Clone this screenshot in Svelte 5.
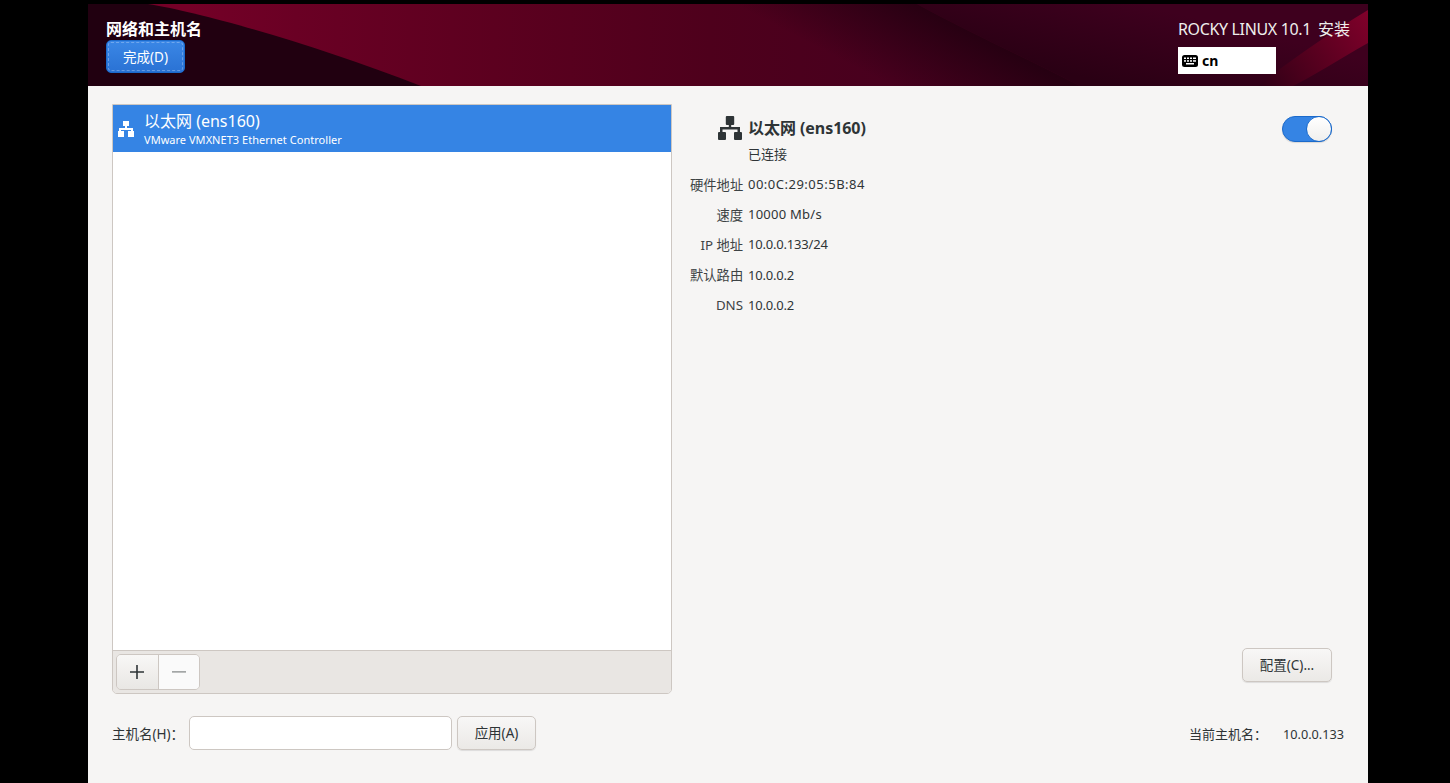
<script>
  const details = [
    { key: '硬件地址', val: '00:0C:29:05:5B:84', fit: 'wide' },
    { key: '速度', val: '10000 Mb/s', fit: 'mid' },
    { key: 'IP 地址', val: '10.0.0.133/24', fit: 'tight' },
    { key: '默认路由', val: '10.0.0.2', fit: 'tight' },
    { key: 'DNS', val: '10.0.0.2', fit: 'tight' }
  ];
</script>

<div class="window">
  <header class="banner">
    <svg class="art" viewBox="0 0 1280 82" preserveAspectRatio="none" aria-hidden="true">
      <defs>
        <linearGradient id="red" gradientUnits="userSpaceOnUse" x1="100" y1="0" x2="1000" y2="0">
          <stop offset="0" stop-color="#740027" />
          <stop offset="0.12" stop-color="#6a0024" />
          <stop offset="0.34" stop-color="#5c001f" />
          <stop offset="0.58" stop-color="#4e001c" />
          <stop offset="0.78" stop-color="#48001e" />
          <stop offset="1" stop-color="#40001c" />
        </linearGradient>
        <linearGradient id="band" gradientUnits="userSpaceOnUse" x1="790" y1="75" x2="829" y2="0">
          <stop offset="0" stop-color="#220010" stop-opacity="0" />
          <stop offset="1" stop-color="#220010" stop-opacity="0.85" />
        </linearGradient>
        <linearGradient id="upper" gradientUnits="userSpaceOnUse" x1="1050" y1="0" x2="1030" y2="82">
          <stop offset="0" stop-color="#3e001e" />
          <stop offset="1" stop-color="#2a0014" />
        </linearGradient>
        <linearGradient id="strip" gradientUnits="userSpaceOnUse" x1="1170" y1="82" x2="1280" y2="10">
          <stop offset="0" stop-color="#2e0016" />
          <stop offset="0.45" stop-color="#54001e" />
          <stop offset="1" stop-color="#80002a" />
        </linearGradient>
      </defs>
      <rect width="1280" height="82" fill="url(#upper)" />
      <path d="M0 0H829C880 28 940 55 992 82H0Z" fill="url(#red)" />
      <path d="M0 0H829C880 28 940 55 992 82H0Z" fill="url(#band)" />
      <path d="M0 0H60C110 8 220 38 333 82H0Z" fill="#210010" />
      <path d="M1170 82C1200 58 1240 30 1280 6V39C1250 56 1225 72 1205 82Z" fill="url(#strip)" />
    </svg>
    <div class="left">
      <h1>网络和主机名</h1>
      <button class="done">完成(D)</button>
    </div>
    <div class="right">
      <div class="product"><span class="latin">ROCKY LINUX 10.1</span><span class="install">安装</span></div>
      <div class="layout">
        <svg width="16" height="12" viewBox="0 0 16 12" aria-hidden="true">
          <rect width="16" height="12" rx="2.500" fill="#000" />
          <g fill="#fff">
            <rect x="2" y="2.500" width="2" height="1.500" /><rect x="5" y="2.500" width="2" height="1.500" /><rect x="8" y="2.500" width="2" height="1.500" /><rect x="11" y="2.500" width="3" height="1.500" />
            <rect x="2" y="5.200" width="2" height="1.500" /><rect x="5" y="5.200" width="2" height="1.500" /><rect x="8" y="5.200" width="2" height="1.500" /><rect x="11" y="5.200" width="3" height="1.500" />
            <rect x="4" y="8" width="8" height="1.500" />
          </g>
        </svg>
        <span>cn</span>
      </div>
    </div>
  </header>

  <main class="content">
    <div class="columns">
      <section class="list-pane">
        <div class="list">
          <div class="row">
            <svg class="net-small" width="16" height="16" viewBox="0 0 16 16" aria-hidden="true">
              <path d="M5 0h6v5H9v2h6v3h1v6h-6v-6h3V9H3v1h3v6H0v-6h1V7h6V5H5z" fill="#fff" />
            </svg>
            <div class="row-text">
              <div class="row-title">以太网 (ens160)</div>
              <div class="row-sub">VMware VMXNET3 Ethernet Controller</div>
            </div>
          </div>
        </div>
        <div class="toolbar">
          <div class="btn-group">
            <button class="tool add" aria-label="添加">
              <svg width="14" height="14" viewBox="0 0 14 14"><path d="M6.200 0h1.600v6.200H14v1.600H7.800V14H6.200V7.800H0V6.200h6.200z" fill="#2e3436" /></svg>
            </button>
            <button class="tool remove" aria-label="移除">
              <svg width="14" height="14" viewBox="0 0 14 14"><rect y="6" width="14" height="1.700" fill="#a3a6a6" /></svg>
            </button>
          </div>
        </div>
      </section>

      <section class="detail">
        <div class="detail-top">
          <div class="head-wrap">
            <div class="head">
              <svg class="net-large" width="24" height="24" viewBox="0 0 24 24" aria-hidden="true">
                <path d="M8.800 0h6.400a1 1 0 0 1 1 1v7a1 1 0 0 1-1 1H13.200v2H22v5h1a1 1 0 0 1 1 1v6a1 1 0 0 1-1 1h-6a1 1 0 0 1-1-1v-6a1 1 0 0 1 1-1h2.500v-2.500h-15V16H7a1 1 0 0 1 1 1v6a1 1 0 0 1-1 1H1a1 1 0 0 1-1-1v-6a1 1 0 0 1 1-1h1v-5h8.800V9H8.800a1 1 0 0 1-1-1V1a1 1 0 0 1 1-1z" fill="#2e3436" />
              </svg>
              <div class="head-title">以太网 (ens160)</div>
            </div>
            <div class="status">已连接</div>
          </div>
          <div class="switch" role="switch" aria-checked="true" tabindex="0"><span class="knob"></span></div>
        </div>
        <div class="grid">
          {#each details as d}
            <div class="key">{d.key}</div>
            <div class="val {d.fit}">{d.val}</div>
          {/each}
        </div>
        <div class="config-row">
          <button class="btn config">配置(C)...</button>
        </div>
      </section>
    </div>

    <div class="bottom">
      <label class="host-label" for="hostname">主机名(H)：</label>
      <input id="hostname" class="host-input" type="text" />
      <button class="btn apply">应用(A)</button>
      <div class="current">
        <span class="current-label">当前主机名：</span>
        <span class="current-val">10.0.0.133</span>
      </div>
    </div>
  </main>
</div>

<style>
  :global(body) {
    margin: 0;
    background: #000;
  }
  .window {
    width: 1280px;
    height: 779px;
    margin-left: 88px;
    padding-top: 4px;
    display: flex;
    flex-direction: column;
    font-family: "Noto Sans", "Noto Sans CJK SC", sans-serif;
    color: #2e3436;
    overflow: hidden;
  }
  .banner {
    position: relative;
    height: 82px;
    flex: none;
    display: flex;
    justify-content: space-between;
    overflow: hidden;
  }
  .art {
    position: absolute;
    inset: 0;
    width: 100%;
    height: 100%;
  }
  .left {
    position: relative;
    padding: 14px 0 0 18px;
  }
  h1 {
    margin: 0;
    font-size: 16px;
    font-weight: 700;
    line-height: 22px;
    color: #fff;
  }
  .done {
    display: block;
    width: 79px;
    height: 33px;
    margin-top: 0;
    padding: 0 0 2px;
    border: 1px solid #1b6acb;
    border-radius: 5px;
    outline: 1px dashed rgba(255, 255, 255, 0.28);
    outline-offset: -3px;
    background: linear-gradient(#3a87e6, #2a72d4);
    color: #fff;
    font: inherit;
    font-size: 13.500px;
  }
  .right {
    position: relative;
    width: 190px;
    padding-top: 14px;
    box-sizing: border-box;
  }
  .product {
    font-size: 16px;
    line-height: 22px;
    color: #eeeeec;
    white-space: nowrap;
  }
  .latin {
    letter-spacing: -0.35px;
  }
  .install {
    margin-left: 7px;
  }
  .layout {
    display: flex;
    align-items: center;
    gap: 4px;
    width: 94px;
    height: 27px;
    margin-top: 7px;
    padding-left: 4px;
    background: #fff;
    color: #000;
    font-size: 14px;
    font-weight: 700;
  }
  .content {
    flex: 1;
    background: #f6f5f4;
    display: flex;
    flex-direction: column;
    padding: 18px 36px 0 24px;
    min-height: 0;
  }
  .columns {
    display: flex;
    height: 590px;
    flex: none;
  }
  .list-pane {
    width: 560px;
    flex: none;
    box-sizing: border-box;
    border: 1px solid #cdc7c2;
    border-radius: 0 0 5px 5px;
    display: flex;
    flex-direction: column;
  }
  .list {
    flex: 1;
    background: #fff;
  }
  .row {
    height: 47px;
    background: #3584e4;
    color: #fff;
    display: flex;
    align-items: center;
    padding-left: 5px;
    gap: 10px;
  }
  .net-small {
    flex: none;
    margin-top: 0;
  }
  .row-title {
    font-size: 16px;
    line-height: 22px;
    margin-top: -1px;
  }
  .row-sub {
    font-size: 11px;
    line-height: 15px;
    letter-spacing: 0.03px;
  }
  .toolbar {
    height: 43px;
    flex: none;
    box-sizing: border-box;
    background: #e9e6e3;
    border-top: 1px solid #cdc7c2;
    border-radius: 0 0 4px 4px;
    padding: 3px 0 0 3px;
  }
  .btn-group {
    display: flex;
    width: 84px;
    height: 36px;
    box-sizing: border-box;
    border: 1px solid #cdc7c2;
    border-radius: 5px;
    overflow: hidden;
  }
  .tool {
    display: flex;
    align-items: center;
    justify-content: center;
    padding: 0;
    border: 0;
  }
  .add {
    width: 42px;
    padding-right: 1px;
    background: linear-gradient(#f8f7f6, #e9e7e4);
    border-right: 1px solid #cdc7c2;
  }
  .remove {
    flex: 1;
    background: #fafafa;
  }
  .detail {
    flex: 1;
    display: flex;
    flex-direction: column;
    min-width: 0;
    padding-left: 18px;
  }
  .detail-top {
    display: flex;
    justify-content: space-between;
    padding-top: 12px;
  }
  .head {
    display: flex;
    align-items: center;
    gap: 6px;
    margin-left: 28px;
    height: 24px;
  }
  .head-title {
    font-size: 16px;
    font-weight: 700;
    line-height: 24px;
    letter-spacing: -0.05px;
    white-space: nowrap;
  }
  .status {
    font-size: 13px;
    line-height: 20px;
    margin: 4px 0 0 58px;
  }
  .switch {
    width: 50px;
    height: 26px;
    box-sizing: border-box;
    border: 1px solid #1b6acb;
    border-radius: 13px;
    background: #3584e4;
    box-shadow: 0 1px 1px rgba(0, 0, 0, 0.12);
    display: flex;
    justify-content: flex-end;
  }
  .knob {
    width: 26px;
    height: 26px;
    flex: none;
    margin: -1px -1px 0 0;
    box-sizing: border-box;
    border: 1px solid #1b6acb;
    border-radius: 50%;
    background: linear-gradient(#ffffff, #f0efed);
  }
  .grid {
    display: grid;
    grid-template-columns: 53px auto;
    justify-content: start;
    column-gap: 5px;
    grid-auto-rows: 30.200px;
    align-items: center;
    font-size: 13px;
    margin-top: 5px;
  }
  .key {
    text-align: right;
    white-space: nowrap;
    font-size: 13.300px;
    color: #3d4345;
  }
  .val {
    white-space: nowrap;
  }
  .wide {
    letter-spacing: 0.5px;
  }
  .mid {
    letter-spacing: 0.25px;
  }
  .tight {
    letter-spacing: -0.2px;
  }
  .config-row {
    margin-top: auto;
    display: flex;
    justify-content: flex-end;
    padding-bottom: 12px;
  }
  .btn {
    box-sizing: border-box;
    height: 34px;
    padding: 0 0 2px;
    border: 1px solid #cdc7c2;
    border-radius: 5px;
    background: linear-gradient(#f8f7f6, #ebe9e6);
    box-shadow: 0 1px 1px rgba(0, 0, 0, 0.1);
    color: #2e3436;
    font: inherit;
    font-size: 13.500px;
  }
  .config {
    width: 90px;
  }
  .bottom {
    display: flex;
    align-items: center;
    height: 34px;
    margin-top: 22px;
    font-size: 13.500px;
  }
  .host-label {
    width: 77px;
    flex: none;
    white-space: nowrap;
    padding-bottom: 1px;
  }
  .host-input {
    width: 263px;
    height: 34px;
    box-sizing: border-box;
    border: 1px solid #cdc7c2;
    border-radius: 5px;
    background: #fff;
    padding: 0 8px;
  }
  .apply {
    width: 79px;
    margin-left: 5px;
  }
  .current {
    margin-left: auto;
    margin-right: -12px;
    display: flex;
    align-items: center;
    gap: 16px;
    padding-top: 1px;
  }
  .current-label {
    font-size: 13px;
    padding-bottom: 1px;
  }
  .current-val {
    font-size: 12.700px;
    padding-top: 1px;
  }
</style>
